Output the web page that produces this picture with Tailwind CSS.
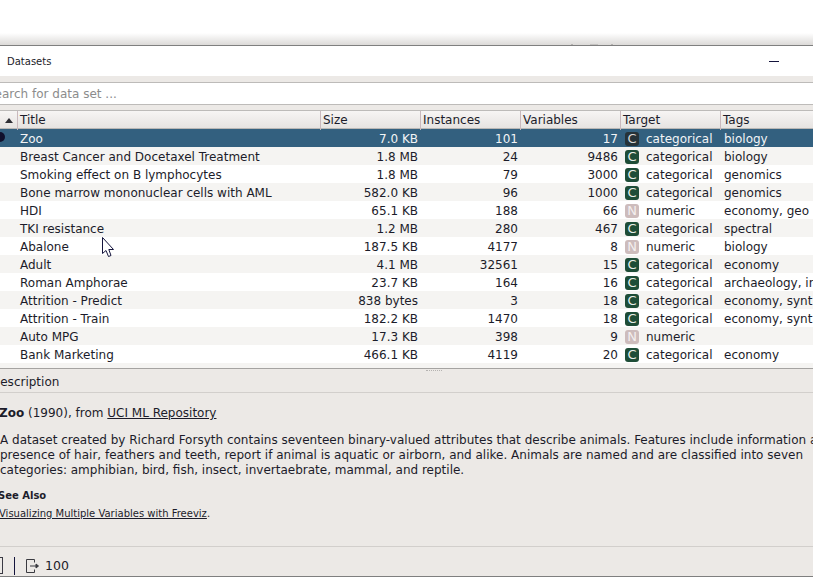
<!DOCTYPE html>
<html lang="en">
<head>
	<meta charset="UTF-8" />
	<title>Datasets</title>
	<script src="https://cdn.jsdelivr.net/npm/@tailwindcss/browser@4"></script>
</head>
<body class="w-[813px] h-[577px] overflow-hidden bg-white font-['DejaVu_Sans',sans-serif] text-[12px] text-[#1c1c2a]">
	<div class="h-[33px] bg-white"></div>
	<div class="h-[12px] bg-gradient-to-b from-white to-[#dcdad8] flex items-end gap-[5px] pl-[571px]">
		<span class="w-[2px] h-px bg-[#b5b3b1]"></span>
		<span class="ml-[12px] w-[8px] h-px bg-[#c4c2c0]"></span>
		<span class="ml-[8px] w-[2px] h-px bg-[#b5b3b1]"></span>
	</div>

	<div class="h-[532px] border-t border-[#7f7f7f] flex flex-col bg-[#ece9e6] relative">
		<!-- title bar -->
		<div class="h-[30px] bg-white flex items-center justify-between pl-[7px] pr-[34px] text-[10px]">
			<span class="pt-[1px]">Datasets</span>
			<span class="w-[10px] h-px bg-[#14143c]"></span>
		</div>

		<!-- search -->
		<div class="pt-[6px] pb-[5px]">
			<div class="h-[23px] bg-white border-y border-[#bdbbb9] flex items-center text-[#8c8c8c] -ml-[13px] pt-[1px]">Search for data set ...</div>
		</div>

		<!-- table -->
		<div class="h-[259px] overflow-hidden bg-white border-b border-[#a5a3a1]" id="table">
			<div class="grid grid-cols-[18px_303px_100px_100px_100px_100px_1fr] h-[19px] border-t border-[#bdbbb9] border-b border-b-[#b9b7b5] bg-gradient-to-b from-[#f7f5f4] to-[#e6e3e1]">
				<div class="border-r border-[#c9b9bd] flex items-center justify-center pb-px">
					<svg width="8" height="5" viewBox="0 0 8 5"><path d="M4 0 L8 5 L0 5 Z" fill="#2e2e34"/></svg>
				</div>
				<div class="border-r border-[#c9b9bd] pl-[2px] leading-[19px]">Title</div>
				<div class="border-r border-[#c9b9bd] pl-[2px] leading-[19px]">Size</div>
				<div class="border-r border-[#c9b9bd] pl-[2px] leading-[19px]">Instances</div>
				<div class="border-r border-[#c9b9bd] pl-[2px] leading-[19px]">Variables</div>
				<div class="border-r border-[#c9b9bd] pl-[2px] leading-[19px]">Target</div>
				<div class="pl-[2px] leading-[19px]">Tags</div>
			</div>
			<div id="rows"></div>
		</div>

		<!-- description -->
		<div class="h-[24px] border-b border-[#d2cfcc] leading-[27px] -ml-[9px] relative">
			Description
			<span class="absolute left-[435px] top-[1px] w-[16px] h-px border-t border-dotted border-[#b5b3b1]"></span>
		</div>
		<div class="flex-1 overflow-hidden">
			<p class="mt-[13px] -ml-[1px] leading-[15px] whitespace-nowrap"><b class="font-bold">Zoo</b> (1990), from <span class="underline">UCI ML Repository</span></p>
			<p class="mt-[12px] leading-[15px] whitespace-nowrap">A dataset created by Richard Forsyth contains seventeen binary-valued attributes that describe animals. Features include information about<br>presence of hair, feathers and teeth, report if animal is aquatic or airborn, and alike. Animals are named and are classified into seven<br>categories: amphibian, bird, fish, insect, invertaebrate, mammal, and reptile.</p>
			<p class="mt-[11px] -ml-[2px] font-bold text-[10px] leading-[14px]">See Also</p>
			<p class="mt-[4px] -ml-[1px] text-[10px] leading-[14px]"><span class="underline">Visualizing Multiple Variables with Freeviz</span>.</p>
		</div>

		<!-- status bar -->
		<div class="h-[31px] border-t border-[#d2cfcc] border-b border-b-[#7f7f7f] flex items-center pt-[8px]">
			<span class="w-[3px] h-[17px] border-y border-r border-[#3a3a44]"></span>
			<span class="ml-[11px] w-px h-[18px] bg-[#14143c]"></span>
			<svg class="ml-[11px]" width="13" height="14" viewBox="0 0 13 14" fill="none" stroke="#3a3a40" stroke-width="1"><path d="M8.5 3.5 V0.5 H0.5 V13.5 H8.5 V10.5"/><path d="M4 7 H12"/><path d="M10 5 L12.5 7 L10 9 Z" fill="#3a3a40"/></svg>
			<span class="ml-[6px] text-[12.5px] pt-[2px]">100</span>
		</div>

		<!-- mouse cursor -->
		<svg class="absolute left-[102px] top-[191px]" width="13" height="21" viewBox="0 0 13 21"><path d="M0.5 0.5 V16.5 L4 13.5 L6.5 19.5 L9 18.5 L6.8 12.5 L11.5 12.5 Z" fill="#fff" stroke="#14143c" stroke-width="1"/></svg>
	</div>

	<script>
		const C = "categorical", N = "numeric";
		const rows = [
			["Zoo","7.0 KB",101,17,C,"biology"],
			["Breast Cancer and Docetaxel Treatment","1.8 MB",24,9486,C,"biology"],
			["Smoking effect on B lymphocytes","1.8 MB",79,3000,C,"genomics"],
			["Bone marrow mononuclear cells with AML","582.0 KB",96,1000,C,"genomics"],
			["HDI","65.1 KB",188,66,N,"economy, geo"],
			["TKI resistance","1.2 MB",280,467,C,"spectral"],
			["Abalone","187.5 KB",4177,8,N,"biology"],
			["Adult","4.1 MB",32561,15,C,"economy"],
			["Roman Amphorae","23.7 KB",164,16,C,"archaeology, in"],
			["Attrition - Predict","838 bytes",3,18,C,"economy, synt"],
			["Attrition - Train","182.2 KB",1470,18,C,"economy, synt"],
			["Auto MPG","17.3 KB",398,9,N,""],
			["Bank Marketing","466.1 KB",4119,20,C,"economy"],
			["Bank Marketing","","","","",""]
		];
		const box = document.getElementById("rows");
		rows.forEach((r, i) => {
			const sel = i === 0;
			const cat = r[4] === C;
			// the selected row gets a darker badge and white text
			const badge = sel ? "bg-[#263238] text-[#d8d8d8]" : cat ? "bg-[#1e4d37] text-[#e8efe9]" : "bg-[#cdbcbc] text-[#f4efef]";
			const row = document.createElement("div");
			row.className = "grid grid-cols-[18px_303px_100px_100px_100px_100px_1fr] h-[18px] leading-[21px] whitespace-nowrap overflow-hidden " +
				(sel ? "bg-[#33607f] text-[#f2f4f6]" : i % 2 ? "bg-[#f5f4f2]" : "bg-white");
			row.innerHTML =
				`<div class="relative">${sel ? '<span class="absolute -left-[5px] top-[3px] w-[10px] h-[10px] rounded-full bg-[#10102c]"></span>' : ''}</div>` +
				`<div class="pl-[2px] ${i === 13 ? "pt-[1px]" : ""}">${r[0]}</div>` +
				`<div class="text-right pr-[3px]">${r[1]}</div>` +
				`<div class="text-right pr-[3px]">${r[2]}</div>` +
				`<div class="text-right pr-[3px]">${r[3]}</div>` +
				`<div class="flex items-start pl-[4px]">${r[4] ? `<span class="mt-[3px] w-[14px] h-[14px] rounded-[3px] text-[13px] leading-[14px] text-center ${badge}">${cat ? "C" : "N"}</span><span class="ml-[7px]">${r[4]}</span>` : ""}</div>` +
				`<div class="pl-[3px]">${r[5]}</div>`;
			box.appendChild(row);
		});
	</script>
</body>
</html>
